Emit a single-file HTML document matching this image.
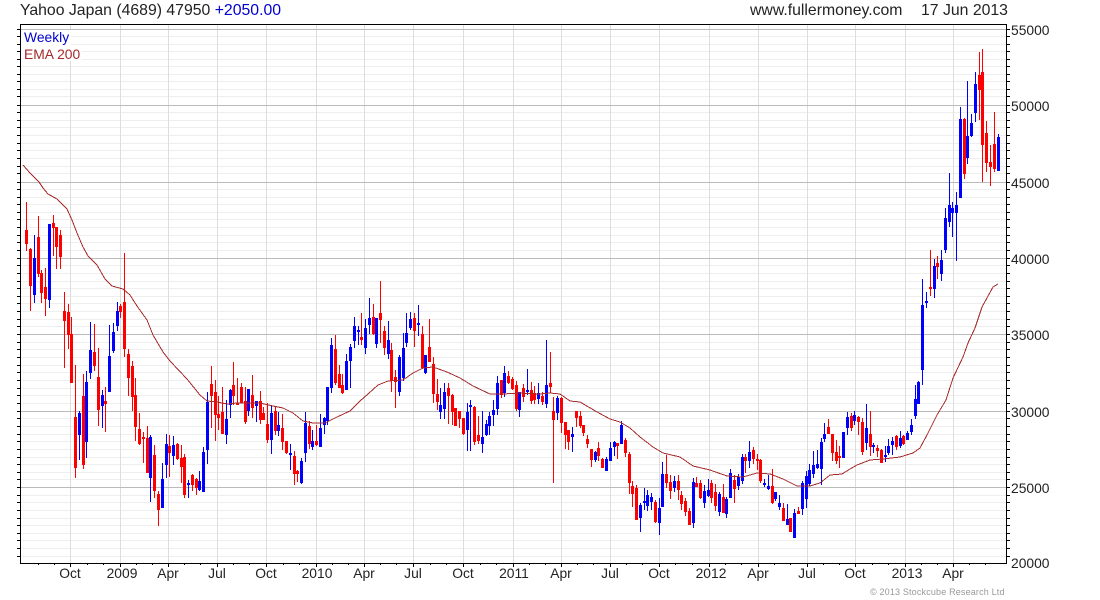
<!DOCTYPE html>
<html><head><meta charset="utf-8"><title>Yahoo Japan weekly chart</title>
<style>
html,body{margin:0;padding:0;background:#fff}
svg{display:block;position:absolute;left:0;top:0}
text{font-family:"Liberation Sans",Arial,sans-serif;font-size:13.85px;fill:#222}
.t{font-size:15.8px}
</style></head><body>
<svg width="1100" height="600" viewBox="0 0 1100 600" xmlns="http://www.w3.org/2000/svg">
<defs>
<path id="mn" d="M0 36.5H1M0 44.5H1M0 51.5H1M0 59.5H1M0 66.5H1M0 74.5H1M0 81.5H1M0 89.5H1M0 96.5H1M0 112.5H1M0 120.5H1M0 127.5H1M0 135.5H1M0 143.5H1M0 150.5H1M0 158.5H1M0 166.5H1M0 173.5H1M0 189.5H1M0 197.5H1M0 204.5H1M0 212.5H1M0 219.5H1M0 227.5H1M0 235.5H1M0 242.5H1M0 250.5H1M0 265.5H1M0 273.5H1M0 281.5H1M0 288.5H1M0 296.5H1M0 303.5H1M0 311.5H1M0 319.5H1M0 326.5H1M0 342.5H1M0 349.5H1M0 357.5H1M0 365.5H1M0 372.5H1M0 380.5H1M0 388.5H1M0 395.5H1M0 403.5H1M0 418.5H1M0 426.5H1M0 434.5H1M0 441.5H1M0 449.5H1M0 457.5H1M0 464.5H1M0 472.5H1M0 479.5H1M0 495.5H1M0 502.5H1M0 510.5H1M0 518.5H1M0 525.5H1M0 533.5H1M0 540.5H1M0 548.5H1M0 556.5H1"/>
<path id="mj" d="M0 29.5H1M0 105.5H1M0 182.5H1M0 258.5H1M0 334.5H1M0 411.5H1M0 487.5H1"/>
</defs>
<g fill="none" shape-rendering="crispEdges">
<use href="#mn" transform="translate(21,0) scale(985,1)" stroke="#eeeeee"/>
<path stroke="#dddddd" d="M70.5 25V563M120.5 25V563M168.5 25V563M217.5 25V563M266.5 25V563M316.5 25V563M364.5 25V563M413.5 25V563M463.5 25V563M513.5 25V563M561.5 25V563M610.5 25V563M659.5 25V563M709.5 25V563M758.5 25V563M807.5 25V563M855.5 25V563M905.5 25V563M953.5 25V563"/>
<use href="#mj" transform="translate(21,0) scale(985,1)" stroke="#bbbbbb"/>
<use href="#mn" transform="translate(17,0) scale(3,1)" stroke="#000"/>
<use href="#mj" transform="translate(17,0) scale(3,1)" stroke="#000"/>
<use href="#mn" transform="translate(1007,0) scale(3,1)" stroke="#000"/>
<use href="#mj" transform="translate(1007,0) scale(3,1)" stroke="#000"/>
<path stroke="#000" d="M70.5 564v3M120.5 564v3M168.5 564v3M217.5 564v3M266.5 564v3M316.5 564v3M364.5 564v3M413.5 564v3M463.5 564v3M513.5 564v3M561.5 564v3M610.5 564v3M659.5 564v3M709.5 564v3M758.5 564v3M807.5 564v3M855.5 564v3M905.5 564v3M953.5 564v3M38.5 564v1M54.5 564v1M87.5 564v1M103.5 564v1M136.5 564v1M152.5 564v1M184.5 564v1M200.5 564v1M233.5 564v1M249.5 564v1M283.5 564v1M299.5 564v1M332.5 564v1M348.5 564v1M380.5 564v1M396.5 564v1M430.5 564v1M446.5 564v1M480.5 564v1M496.5 564v1M529.5 564v1M545.5 564v1M577.5 564v1M593.5 564v1M626.5 564v1M642.5 564v1M675.5 564v1M692.5 564v1M725.5 564v1M741.5 564v1M774.5 564v1M790.5 564v1M823.5 564v1M839.5 564v1M872.5 564v1M888.5 564v1M921.5 564v1M937.5 564v1M969.5 564v1M985.5 564v1"/>
<rect x="22" y="30" width="49" height="15" fill="#fff"/>
<rect x="22" y="45" width="60" height="16" fill="#fff"/>
<!-- blue candles -->
<path stroke="#0000ff" stroke-width="1" d="M34.5 235V303M49.5 224V308M79.5 411V460M86.5 371V458M90.5 322V379M102.5 390V428M109.5 325V392M113.5 323V353M117.5 302V331M150.5 435V502M162.5 463V508M166.5 434V478M173.5 436V465M188.5 480V498M199.5 471V491M203.5 447V492M207.5 392V464M226.5 400V444M230.5 389V418M248.5 389V416M256.5 401V422M271.5 406V454M278.5 412V436M290.5 444V470M301.5 458V484M305.5 412V462M312.5 430V450M320.5 414V447M324.5 417V434M327.5 387V425M331.5 338V393M346.5 354V390M350.5 344V388M354.5 317V348M358.5 326V345M365.5 319V354M369.5 298V334M376.5 318V348M388.5 321V359M399.5 355V396M403.5 333V381M406.5 313V347M410.5 312V330M418.5 305V336M425.5 355V374M440.5 388V419M444.5 383V419M467.5 403V451M470.5 400V451M482.5 411V453M486.5 420V436M489.5 412V435M493.5 400V426M497.5 376V415M504.5 366V397M519.5 392V417M527.5 369V395M538.5 383V404M546.5 340V408M557.5 396V420M572.5 427V452M595.5 451V462M606.5 457V471M610.5 442V461M614.5 441V456M621.5 421V444M640.5 503V532M644.5 488V510M647.5 490V511M651.5 493V510M659.5 498V535M662.5 462V507M674.5 476V492M693.5 478V528M704.5 485V508M708.5 479V497M719.5 492V516M726.5 497V518M730.5 469V498M738.5 474V490M742.5 454V484M749.5 441V468M764.5 479V487M768.5 475V490M775.5 492V501M779.5 495V510M787.5 504V525M794.5 509V538M802.5 481V515M806.5 471V508M809.5 464V486M813.5 451V478M817.5 450V469M821.5 438V485M824.5 423V442M843.5 432V458M847.5 412V435M854.5 411V425M866.5 404V450M873.5 443V453M885.5 446V462M888.5 439V455M892.5 437V455M900.5 431V448M907.5 431V440M911.5 419V435M915.5 385V419M918.5 381V404M922.5 279V385M926.5 292V308M934.5 259V298M941.5 250V281M945.5 208V253M949.5 173V227M952.5 202V237M956.5 192V261M960.5 107V198M967.5 81V164M971.5 114V137M975.5 72V122M998.5 134V171"/>
<path stroke="#0000ff" stroke-width="3" d="M34.5 258V295M49.5 224V300M79.5 413V435M86.5 382V442M90.5 350V373M102.5 395V406M109.5 356V392M113.5 332V351M117.5 311V326M150.5 437V478M162.5 479V508M166.5 444V465M173.5 445V456M188.5 483V485M199.5 481V490M203.5 452V492M207.5 402V450M226.5 419V435M230.5 390V405M248.5 389V411M256.5 401V406M271.5 413V440M278.5 425V431M290.5 453V455M301.5 461V483M305.5 423V453M312.5 441V447M320.5 428V447M324.5 418V425M327.5 387V421M331.5 345V388M346.5 361V390M350.5 347V361M354.5 326V341M358.5 330V332M365.5 328V348M369.5 318V325M376.5 318V344M388.5 340V354M399.5 357V392M403.5 348V378M406.5 333V343M410.5 319V328M418.5 323V325M425.5 355V373M440.5 405V412M444.5 392V409M467.5 412V430M470.5 405V407M482.5 437V444M486.5 424V435M489.5 416V426M493.5 410V415M497.5 383V409M504.5 373V393M519.5 392V410M527.5 390V392M538.5 393V399M546.5 385V404M557.5 398V413M572.5 434V437M595.5 452V460M606.5 459V471M610.5 448V461M614.5 442V447M621.5 425V444M640.5 505V518M644.5 501V503M647.5 495V506M651.5 497V502M659.5 508V523M662.5 474V507M674.5 481V488M693.5 482V523M704.5 491V503M708.5 490V496M719.5 494V512M726.5 499V514M730.5 473V498M738.5 477V486M742.5 457V481M749.5 452V461M764.5 483V485M768.5 486V489M775.5 492V499M779.5 503V507M787.5 519V525M794.5 513V538M802.5 483V509M806.5 476V499M809.5 470V484M813.5 465V474M817.5 464V468M821.5 442V469M824.5 434V439M843.5 432V458M847.5 417V428M854.5 415V421M866.5 428V443M873.5 445V447M885.5 455V457M888.5 446V453M892.5 441V445M900.5 438V446M907.5 433V440M911.5 425V432M915.5 399V416M918.5 382V404M922.5 305V370M926.5 301V303M934.5 266V289M941.5 260V274M945.5 218V250M949.5 205V222M952.5 208V213M956.5 205V213M960.5 119V198M967.5 136V158M971.5 123V136M975.5 84V113M998.5 137V171"/>
<!-- red candles -->
<path stroke="#ff0000" stroke-width="1" d="M26.5 202V251M30.5 248V311M38.5 216V277M41.5 270V303M45.5 268V316M53.5 215V256M56.5 227V269M60.5 230V269M64.5 292V368M68.5 304V349M71.5 317V383M75.5 365V478M83.5 374V469M94.5 324V371M98.5 348V426M105.5 387V432M120.5 304V318M124.5 253V357M128.5 349V396M132.5 361V411M135.5 378V441M139.5 413V445M143.5 432V463M147.5 426V473M154.5 445V498M158.5 491V526M169.5 435V477M177.5 443V460M181.5 445V483M184.5 454V498M192.5 474V491M196.5 478V495M211.5 366V428M215.5 380V441M218.5 396V430M222.5 387V434M233.5 362V405M237.5 378V405M241.5 383V403M245.5 387V424M252.5 375V418M260.5 391V424M263.5 407V420M267.5 403V443M275.5 407V435M282.5 414V450M286.5 441V454M294.5 451V485M297.5 470V482M309.5 421V449M316.5 425V446M335.5 335V385M339.5 365V388M342.5 374V394M361.5 313V345M373.5 304V335M380.5 281V343M384.5 326V355M391.5 343V392M395.5 370V408M414.5 313V347M422.5 326V369M429.5 319V362M433.5 357V403M437.5 379V410M448.5 383V424M452.5 394V425M455.5 408V426M459.5 411V428M463.5 418V435M474.5 406V445M478.5 416V444M501.5 380V398M508.5 371V384M512.5 377V390M516.5 381V411M523.5 384V402M531.5 382V404M534.5 386V404M542.5 392V405M550.5 352V393M553.5 397V483M561.5 397V433M565.5 422V449M568.5 430V450M576.5 411V427M580.5 411V428M583.5 425V436M587.5 435V448M591.5 449V467M598.5 442V461M602.5 458V468M617.5 443V459M625.5 438V457M629.5 452V494M632.5 481V507M636.5 485V520M655.5 500V523M666.5 455V488M670.5 475V499M678.5 475V500M681.5 491V510M685.5 498V516M689.5 508V525M696.5 477V487M700.5 480V499M711.5 480V503M715.5 484V511M723.5 484V513M734.5 475V503M745.5 454V473M753.5 447V464M757.5 454V470M760.5 459V483M772.5 469V504M783.5 503V521M790.5 518V532M798.5 507V514M828.5 419V434M832.5 434V461M836.5 440V464M839.5 446V468M851.5 413V431M858.5 416V435M862.5 418V455M870.5 411V456M877.5 445V457M881.5 449V463M896.5 435V450M903.5 435V445M930.5 250V296M937.5 256V279M964.5 118V179M979.5 52V120M982.5 49V182M986.5 121V172M990.5 145V186M994.5 112V172"/>
<path stroke="#ff0000" stroke-width="3" d="M26.5 230V244M30.5 249V286M38.5 237V274M41.5 273V293M45.5 287V299M53.5 223V228M56.5 227V247M60.5 235V257M64.5 311V321M68.5 312V335M71.5 334V383M75.5 417V468M83.5 396V465M94.5 352V366M98.5 377V410M105.5 401V404M120.5 306V312M124.5 302V349M128.5 354V378M132.5 366V397M135.5 395V427M139.5 429V444M143.5 437V439M147.5 438V473M154.5 455V491M158.5 494V510M169.5 446V453M177.5 444V459M181.5 458V467M184.5 457V495M192.5 475V485M196.5 479V488M211.5 384V396M215.5 392V415M218.5 414V418M222.5 412V434M233.5 385V396M237.5 403V405M241.5 387V403M245.5 401V422M252.5 395V408M260.5 401V420M263.5 413V420M267.5 424V440M275.5 411V431M282.5 428V442M286.5 441V453M294.5 456V474M297.5 471V474M309.5 426V444M316.5 441V445M335.5 349V383M339.5 374V388M342.5 385V393M361.5 337V340M373.5 317V334M380.5 313V320M384.5 331V348M391.5 350V381M395.5 377V382M414.5 318V331M422.5 334V368M429.5 347V362M433.5 364V394M437.5 394V402M448.5 388V396M452.5 395V412M455.5 408V426M459.5 411V419M463.5 418V434M474.5 407V442M478.5 435V441M501.5 380V395M508.5 376V383M512.5 379V389M516.5 385V409M523.5 388V397M531.5 390V401M534.5 393V400M542.5 396V402M550.5 383V387M553.5 411V420M561.5 398V423M565.5 422V435M568.5 430V442M576.5 411V418M580.5 416V426M583.5 425V433M587.5 439V444M591.5 449V460M598.5 448V456M602.5 459V468M617.5 443V446M625.5 440V453M629.5 454V483M632.5 486V494M636.5 488V520M655.5 502V522M666.5 474V483M670.5 482V491M678.5 481V490M681.5 495V504M685.5 501V512M689.5 511V525M696.5 483V487M700.5 483V498M711.5 483V498M715.5 492V506M723.5 497V513M734.5 480V489M745.5 457V461M753.5 450V459M757.5 459V461M760.5 460V481M772.5 486V503M783.5 508V521M790.5 518V532M798.5 511V514M828.5 427V434M832.5 434V453M836.5 452V461M839.5 456V458M851.5 416V428M858.5 417V422M862.5 422V452M870.5 434V447M877.5 448V451M881.5 450V463M896.5 436V447M903.5 436V444M930.5 287V289M937.5 263V267M964.5 119V174M979.5 75V90M982.5 72V145M986.5 133V163M990.5 162V167M994.5 144V169"/>
<path fill="#000" d="M20 24H1007V25H21V563H1006V25H1007V564H20Z"/>
<polyline fill="none" stroke="#a52a2a" stroke-width="1" points="23,165 30,173 39,182 43,188 48,194 57,199 60,202 67,209 72,220 77,233 83,247 88,256 97,265 105,279 112,286 123,289 130,295 137,306 147,320 153,335 163,352 170,361 187,379 200,395 207,401 217,402 227,404 237,403 250,403 260,403 273,406 283,408 293,413 303,421 313,423 325,423 337,417 350,411 360,401 368,394 378,385 388,381 403,380 413,373 423,368 433,367 447,372 460,378 473,386 490,394 503,394 520,393 540,394 550,393 560,394 570,401 580,402 597,412 610,419 620,422 630,428 640,437 653,447 663,453 680,457 693,466 710,470 727,476 743,477 757,473 770,474 783,479 797,486 810,486 820,483 830,475 842,474 850,469 857,465 870,460 883,459 900,457 913,453 920,448 928,433 937,415 946,400 953,378 963,357 968,343 975,328 982,307 993,287 998,284"/>
</g>
<text class="t" x="20" y="15">Yahoo Japan (4689) 47950 <tspan fill="#0000cc" style="fill:#0000cc">+2050.00</tspan></text>
<text class="t" x="750" y="15">www.fullermoney.com</text>
<text class="t" x="921" y="15">17 Jun 2013</text>
<text x="24" y="42" style="fill:#0000cc">Weekly</text>
<text x="24" y="59" style="fill:#a52a2a">EMA 200</text>
<g>
<text x="1011" y="35">55000</text><text x="1011" y="111">50000</text><text x="1011" y="188">45000</text><text x="1011" y="264">40000</text><text x="1011" y="340">35000</text><text x="1011" y="417">30000</text><text x="1011" y="493">25000</text><text x="1011" y="568">20000</text>
</g>
<g text-anchor="middle">
<text x="70" y="578">Oct</text><text x="122" y="578">2009</text><text x="168" y="578">Apr</text><text x="217" y="578">Jul</text><text x="266" y="578">Oct</text><text x="317" y="578">2010</text><text x="364" y="578">Apr</text><text x="413" y="578">Jul</text><text x="463" y="578">Oct</text><text x="514" y="578">2011</text><text x="561" y="578">Apr</text><text x="610" y="578">Jul</text><text x="659" y="578">Oct</text><text x="711" y="578">2012</text><text x="758" y="578">Apr</text><text x="807" y="578">Jul</text><text x="855" y="578">Oct</text><text x="907" y="578">2013</text><text x="953" y="578">Apr</text>
</g>
<text x="870" y="595" style="font-size:9px;fill:#999;letter-spacing:.17px">© 2013 Stockcube Research Ltd</text>
</svg>
</body></html>
